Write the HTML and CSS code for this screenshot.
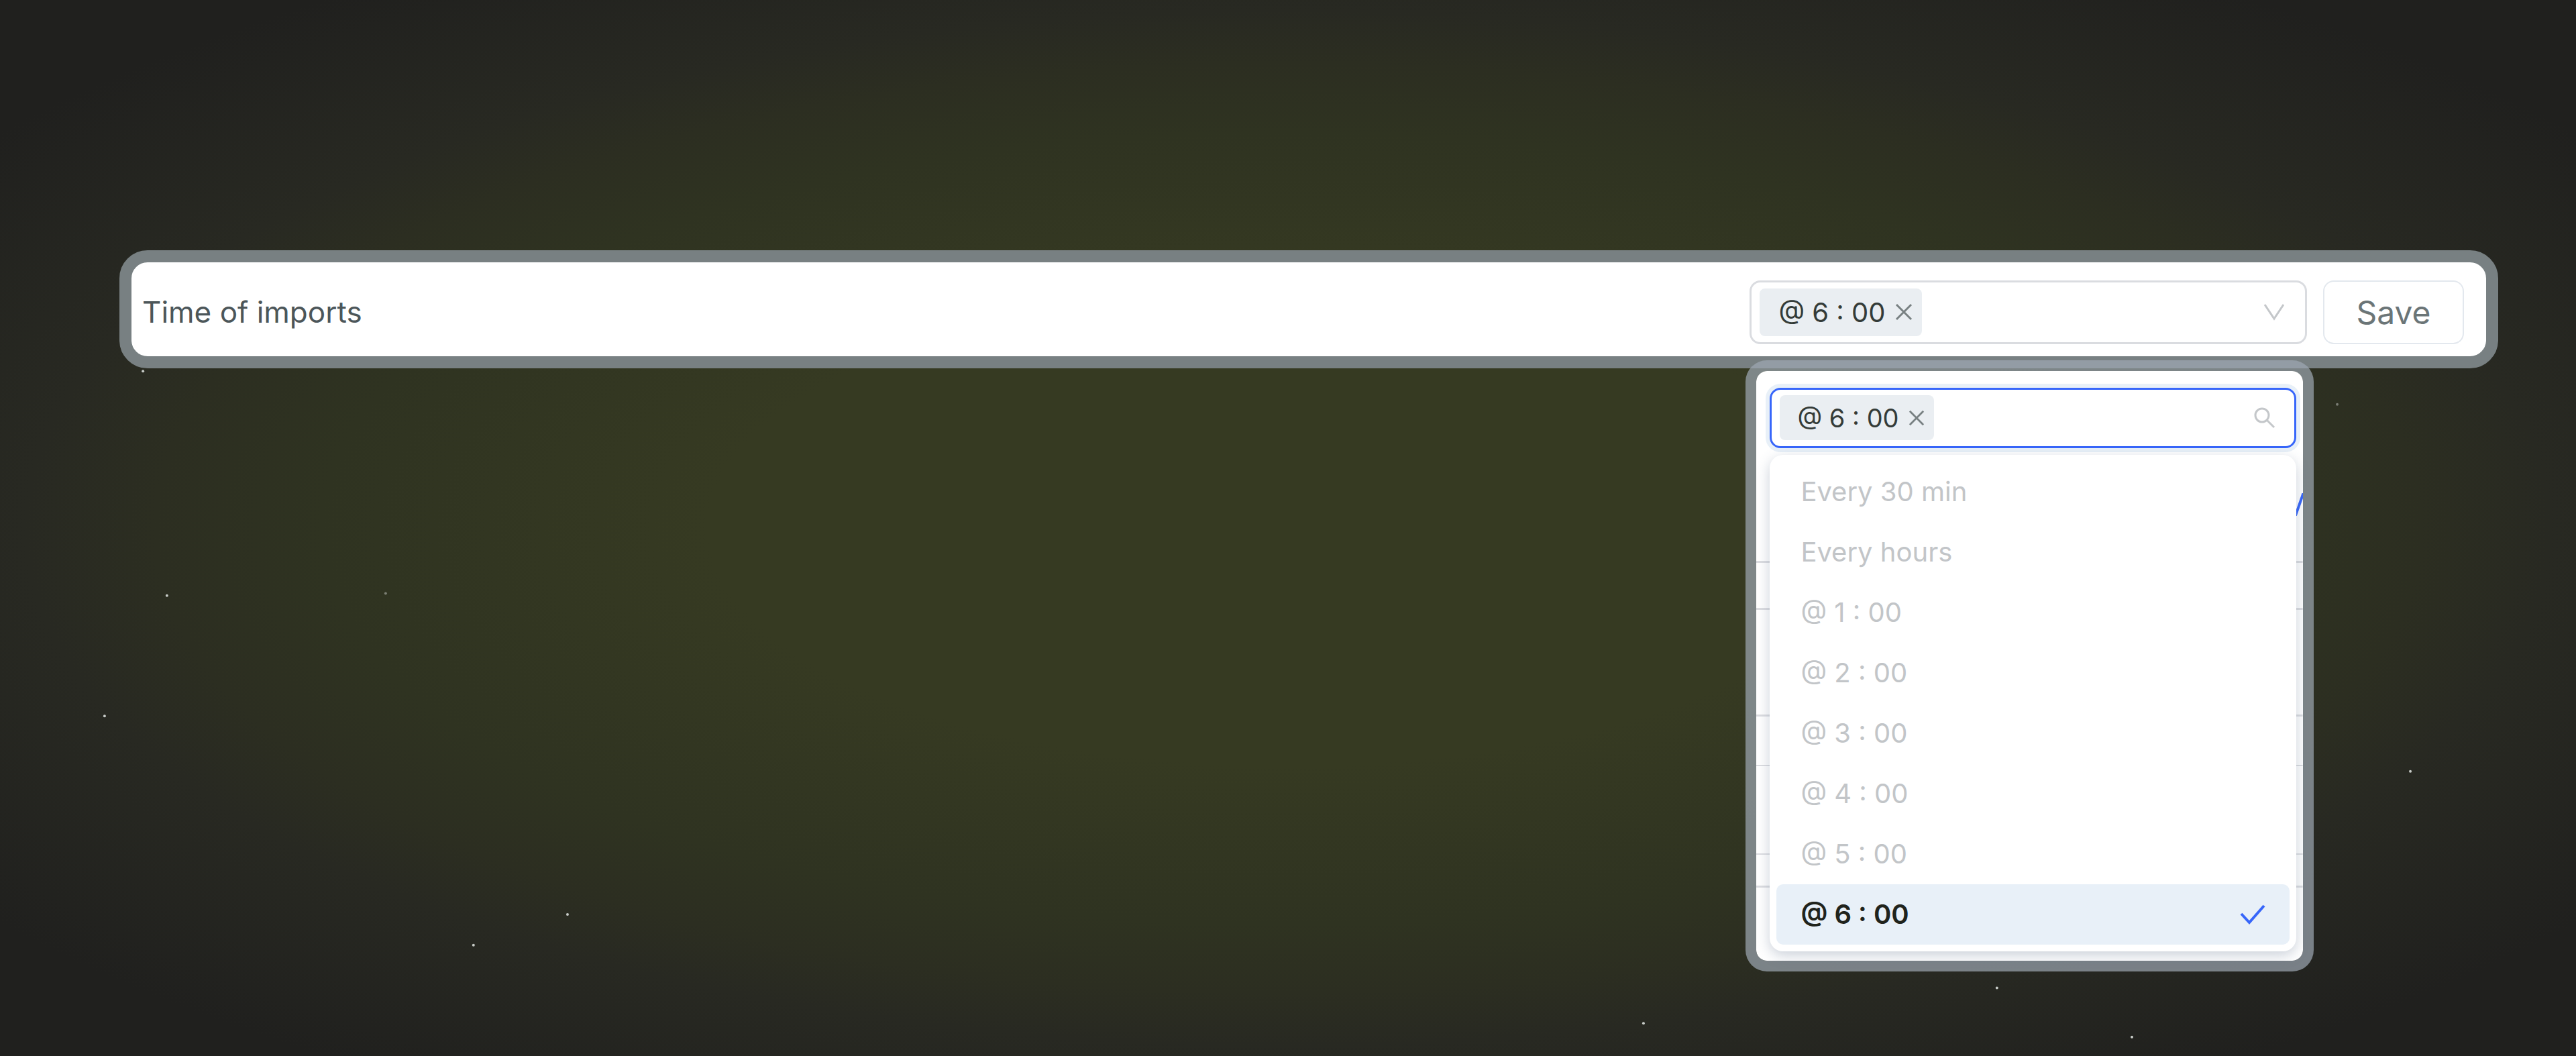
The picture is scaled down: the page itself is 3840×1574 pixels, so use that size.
FILE: index.html
```html
<!DOCTYPE html>
<html lang="en">
<head>
    <meta charset="UTF-8">
    <meta name="viewport" content="width=device-width, initial-scale=1.0">
    <title>Time of imports</title>
    <link rel="stylesheet" href="styles.css">
</head>
<body>
    <svg class="stars" aria-hidden="true">
        <circle cx="5.55%" cy="35.15%" r="2" />
        <circle cx="6.48%" cy="56.4%" r="2" />
        <circle class="faint" cx="14.97%" cy="56.2%" r="2" />
        <circle cx="4.06%" cy="67.8%" r="2" />
        <circle cx="22.03%" cy="86.6%" r="2" />
        <circle cx="18.38%" cy="89.5%" r="2" />
        <circle cx="63.8%" cy="96.9%" r="2" />
        <circle cx="77.52%" cy="93.55%" r="2" />
        <circle cx="82.76%" cy="98.2%" r="2" />
        <circle class="faint" cx="90.73%" cy="38.3%" r="2" />
        <circle cx="93.57%" cy="73.05%" r="2" />
    </svg>

    <main class="page">
        <form class="bar">
            <label class="bar-label" for="import-time">Time of imports</label>

            <div class="picker">
                <div class="field">
                    <span class="tag">
                        @ 6 : 00
                        <button class="tag-remove" type="button" aria-label="Remove @ 6 : 00">
                            <svg viewBox="0 0 26 26"><path d="M2 2 24 24M24 2 2 24" /></svg>
                        </button>
                    </span>
                    <select class="field-input" id="import-time">
                        <option value=""></option>
                        <option>Every 30 min</option>
                        <option>Every hours</option>
                        <option>@ 6 : 00</option>
                    </select>
                    <svg class="chevron" viewBox="0 0 32 26" aria-hidden="true"><path d="M2 2 16 23 30 2" /></svg>
                </div>

                <div class="menu">
                    <svg class="menu-lines" aria-hidden="true">
                        <rect y="283" width="100%" height="3" />
                        <rect y="353" width="100%" height="3" />
                        <rect y="512" width="100%" height="3" />
                        <rect y="587" width="100%" height="2" />
                        <rect y="719" width="100%" height="2" />
                        <rect y="767" width="100%" height="3" />
                    </svg>
                    <svg class="menu-trace" viewBox="0 0 10 34" aria-hidden="true"><path d="M-2 36 12 -4" /></svg>

                    <div class="field field-focus">
                        <span class="tag">
                            @ 6 : 00
                            <button class="tag-remove" type="button" aria-label="Remove @ 6 : 00">
                                <svg viewBox="0 0 26 26"><path d="M2 2 24 24M24 2 2 24" /></svg>
                            </button>
                        </span>
                        <input class="field-input" type="text" aria-label="Search time">
                        <svg class="search" viewBox="0 0 32 32" aria-hidden="true"><circle cx="12" cy="12" r="10" /><path d="M19 19 30 30" /></svg>
                    </div>

                    <ul class="options" role="listbox" aria-label="Time of imports">
                        <li class="option" role="option" aria-disabled="true">Every 30 min</li>
                        <li class="option" role="option" aria-disabled="true">Every hours</li>
                        <li class="option" role="option" aria-disabled="true">@ 1 : 00</li>
                        <li class="option" role="option" aria-disabled="true">@ 2 : 00</li>
                        <li class="option" role="option" aria-disabled="true">@ 3 : 00</li>
                        <li class="option" role="option" aria-disabled="true">@ 4 : 00</li>
                        <li class="option" role="option" aria-disabled="true">@ 5 : 00</li>
                        <li class="option selected" role="option" aria-selected="true">
                            @ 6 : 00
                            <svg class="check" viewBox="0 0 38 30" aria-hidden="true"><path d="M2 14 14 27 36 2" /></svg>
                        </li>
                    </ul>
                </div>
            </div>

            <button class="save" type="button">Save</button>
        </form>
    </main>
</body>
</html>
```

FILE: styles.css
```css
*,
*::before,
*::after {
    box-sizing: border-box;
    margin: 0;
    padding: 0;
}

body {
    background: radial-gradient(ellipse farthest-side at 50% 50%, #363a22 0%, #363a22 45%, #2f3321 75%, #2c2e21 88%, #282922 98%, #20201e 125%);
    color: #4c5659;
    font-family: "Inter", "Open Sans", sans-serif;
    font-size: 40px;
    min-height: 100vh;
}

button,
input,
select {
    background: none;
    border: 0;
    color: inherit;
    font: inherit;
    outline: 0;
}

svg {
    fill: none;
    stroke: currentColor;
    stroke-width: 3px;
}

.stars {
    position: absolute;
    top: 0;
    left: 0;
    width: 100%;
    height: 100%;
    fill: #c8ccc8;
    stroke: none;
}

.faint {
    opacity: 0.5;
}

.page {
    padding: 373px 116px 0 178px;
}

.bar {
    position: relative;
    display: flex;
    align-items: center;
    gap: 24px;
    background: #ffffff;
    border: 18px solid #788082;
    border-radius: 42px;
    height: 176px;
    padding: 8px 33px 0 16px;
}

.bar-label {
    flex: 1;
    font-size: 44px;
}

.picker {
    position: relative;
    width: 24%;
}

.field {
    display: flex;
    align-items: center;
    border: 3px solid #dadce0;
    border-radius: 16px;
    height: 95px;
    padding: 0 30px 0 12px;
}

.field-input {
    appearance: none;
    flex: 1;
    min-width: 0;
    height: 100%;
}

.tag {
    display: flex;
    align-items: center;
    gap: 14px;
    background: #eaeef2;
    border-radius: 8px;
    color: #343b38;
    height: 71px;
    padding: 0 14px 0 28px;
    white-space: nowrap;
}

.tag-remove {
    display: flex;
    color: #788082;
    cursor: pointer;
}

.tag-remove svg {
    width: 26px;
    height: 26px;
}

.chevron {
    color: #c4c7ca;
    width: 32px;
    height: 26px;
}

.save {
    border: 2px solid #e3e8ee;
    border-radius: 16px;
    color: #6b7577;
    cursor: pointer;
    font-size: 48px;
    width: 210px;
    height: 95px;
}

/* dropdown */
.menu {
    position: absolute;
    top: calc(100% + 24px);
    left: -6px;
    right: -10px;
    background: #ffffff;
    background-clip: padding-box;
    border: 16px solid rgba(158, 168, 180, 0.7);
    border-radius: 32px;
    padding: 25px 10px 14px 20px;
    z-index: 1;
}

.menu .field {
    height: 90px;
    padding: 0 28px 0 12px;
}

.menu .tag {
    font-size: 38px;
    height: 67px;
    padding: 0 14px 0 26px;
}

.menu .tag-remove svg {
    width: 24px;
    height: 24px;
}

.menu .field-focus {
    position: relative;
    border-color: #3766fa;
    box-shadow: 0 0 0 6px #e8f0f8;
}

.menu-lines {
    position: absolute;
    top: 0;
    left: 0;
    width: 100%;
    height: 100%;
    fill: #dcdde1;
    stroke: none;
}

.menu-trace {
    position: absolute;
    top: 182px;
    right: 0;
    color: #3766fa;
    stroke-width: 4px;
    width: 10px;
    height: 34px;
}

.search {
    color: #c4c7ca;
    width: 32px;
    height: 32px;
}

.options {
    position: relative;
    background: #ffffff;
    border-radius: 20px;
    box-shadow: 0 6px 20px rgba(80, 100, 130, 0.3);
    list-style: none;
    margin-top: 10px;
    padding: 10px;
}

.option {
    display: flex;
    align-items: center;
    justify-content: space-between;
    border-radius: 10px;
    color: #c2c5c8;
    height: 90px;
    padding: 0 36px;
}

.selected {
    background: #e8f0f8;
    color: #20231c;
    font-weight: 600;
}

.check {
    color: #3766fa;
    stroke-width: 4px;
    width: 38px;
    height: 30px;
}
```
